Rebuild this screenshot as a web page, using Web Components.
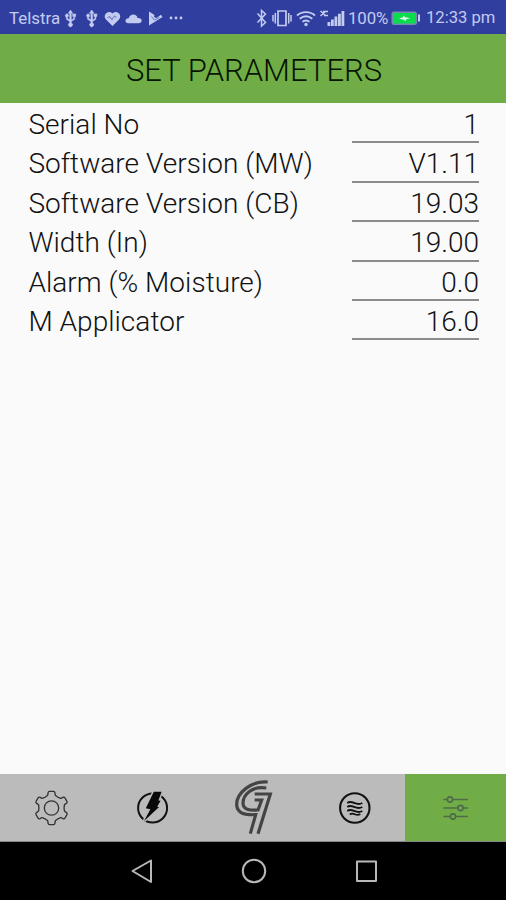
<!DOCTYPE html>
<html lang="en">
<head>
<meta charset="utf-8">
<title>Set Parameters</title>
<style>
html,body{margin:0;padding:0;height:100%;background:#fafafa;overflow:hidden}
body{font-family:Roboto,"Liberation Sans",sans-serif}
</style>
</head>
<body>
<param-screen></param-screen>
<script>
function define(name, html) {
  customElements.define(name, class extends HTMLElement {
    constructor() {
      super();
      this.attachShadow({mode: 'open'}).innerHTML = html;
    }
  });
}

// Outline of a six-toothed gear centred on the origin.
function gearPath() {
  const p = (r, deg) => {
    const a = deg * Math.PI / 180;
    return (r * Math.cos(a)).toFixed(2) + ' ' + (r * Math.sin(a)).toFixed(2);
  };
  let d = '';
  for (let k = 0; k < 6; k++) {
    const a = 60 * k - 90;
    d += (k ? 'L' : 'M') + p(15.6, a - 13) + 'Q' + p(17, a - 11) + ' ' + p(16.8, a - 7) +
         'L' + p(16.8, a + 7) + 'Q' + p(17, a + 11) + ' ' + p(15.6, a + 13) +
         'Q' + p(12.6, a + 15) + ' ' + p(12.9, a + 23) +
         'Q' + p(12.2, a + 30) + ' ' + p(12.9, a + 37) +
         'Q' + p(12.6, a + 45) + ' ' + p(15.6, a + 47);
  }
  return d + 'z';
}

define('status-bar', `
<style>
:host{display:flex;align-items:center;justify-content:space-between;height:34px;box-sizing:border-box;padding:2px 10px 0 9px;background:#303f9f;color:#c3cbf0;font-size:16.6px;line-height:20px}
div{display:flex;align-items:center}
span{white-space:nowrap}
svg{display:block;fill:#c3cbf0;stroke:none}
.l{fill:none;stroke:#c3cbf0}
</style>
<div><span style="width:51px;font-size:16.9px">Telstra</span>
<svg width="126" height="20" viewBox="60 7 126 20">
 <g id="u"><path d="M70.500 9l2.300 3.300h-1.500V19l2.400-1.500v-2h-1v-2.600h3v2.600h-1v2.700l-3.400 2.200v1.500a2 2 0 1 1-1.600 0v-1.500l-3.400-2.200v-2.100a1.600 1.600 0 1 1 1.200 0v1.300l2.200 1.400v-6.500h-1.500z" stroke="#c3cbf0" stroke-width=".5"/></g>
 <use href="#u" x="21.200"/>
 <path d="M112.500 25l-6.500-6.500c-4-4.500 2.500-10.500 6.500-6 4-4.500 10.500 1.500 6.500 6z"/>
 <path class="l" style="stroke:#7a87ca;stroke-width:1.200" d="M107.500 17l2-1.500 2.500 3 2.500-3.500 2 1.500"/>
 <path d="M128.500 22.300c-4 0-4-5 .2-5 1.500-5.500 8.500-4.500 8.800-.2 5.500-.4 5.500 5.200.8 5.200z"/>
 <path d="M149 10.500l5.500 3.500-.5 2 2.500 1 4.500-3.300 1.500 2.300-13.500 8.500z"/>
 <path class="l" style="stroke:#5f6dbb;stroke-width:.9" d="M151.500 15.500l3 3.500 5-2.500"/>
 <circle cx="171" cy="17" r="1.400"/><circle cx="176" cy="17" r="1.400"/><circle cx="181" cy="17" r="1.400"/>
</svg></div>
<div><svg width="92" height="20" viewBox="255 7 92 20">
 <path class="l" stroke-width="1.500" d="M257.500 12.500l8 9-4 3.500V9.500l4 3.500-8 8.500"/>
 <path class="l" stroke-width="1.700" d="M278 10h8v14.500h-8z"/>
 <path class="l" stroke-width="1.500" d="M275.300 12v10.500M273 14v6.500M288.700 12v10.500M291 14v6.500"/>
 <path class="l" stroke-width="1.900" d="M297 14.500c5-4.500 13-4.500 18 0M299.700 17.700c4-3 8.600-3 12.600 0M302.500 20.800c2-1.500 5-1.500 7 0"/>
 <circle cx="306" cy="23.500" r="1.700"/>
 <path class="l" stroke-width="1.600" d="M320.500 10l5.500 5M326 10l-5.500 5M323 10.500h5M324 14.500h4"/>
 <path d="M327.500 21h2.800v4h-2.800zM331 18.500h2.800V25H331zM334.500 15.500h2.800V25h-2.800zM338 12.700h2.800V25H338zM341.500 10h2.800v15h-2.800z"/>
</svg>
<span style="width:40px;margin-left:1px;font-size:16.800px;letter-spacing:-.1px">100%</span>
<svg style="margin-left:3px" width="30" height="20" viewBox="391 7 30 20">
 <rect x="391.500" y="10.500" width="25.500" height="13.500" rx="2.500" fill="#7589b5"/>
 <rect x="393" y="12" width="22.500" height="10.500" rx="1" fill="#0bdc4e"/>
 <path d="M418 13.500h2v7h-2z"/><path fill="#d9ffe3" d="M399 17.500l4-1.300v-1.700l2.500 1.700 4.500 1.100-4 1.300v1.700l-2.500-1.600z"/>
</svg>
<span style="margin-left:5px;width:70px">12:33 pm</span></div>`);

define('title-bar', `
<style>:host{display:flex;height:69px;align-items:center;justify-content:center;background:#70ad47;color:#071500;font-weight:300;font-size:31px;white-space:nowrap;box-sizing:border-box;padding:3px 0 0 2px}</style>
<slot></slot>`);

define('param-row', `
<style>
:host{display:flex;height:39.4px;padding:0 27px 0 28.4px;justify-content:space-between;color:#111;font-weight:300;font-size:28px;line-height:41px}
.name{white-space:nowrap;letter-spacing:.04px}
.value{width:127px;box-sizing:border-box;border-bottom:2px solid #8b8b8b;text-align:right}
</style><div class="name"><slot></slot></div><div class="value"><slot name="value"></slot></div>`);

define('tab-item', `
<style>
:host{flex:1 1 0;display:flex;align-items:center;justify-content:center;background:#bbb}
:host([active]){background:#70ad47}
::slotted(svg){display:block}
</style><slot></slot>`);

define('tab-bar', `<style>:host{display:flex;height:68px;border-bottom:1px solid #888;box-sizing:border-box}</style><slot></slot>`);

define('system-nav', `
<style>
:host{display:flex;height:58px;background:#000;align-items:center;justify-content:center;gap:84px;box-sizing:border-box;padding-left:1px}
svg{display:block;fill:none;stroke:#b9b9b9;stroke-width:2}
</style>
<svg width="28" height="28" viewBox="0 0 28 28"><path stroke-linejoin="round" d="M4.500 14L23 3.500v21.500z"/></svg>
<svg width="28" height="28" viewBox="0 0 28 28"><circle cx="14" cy="14" r="11.200"/></svg>
<svg width="28" height="28" viewBox="0 0 28 28"><path stroke-linejoin="round" d="M5 4.500h19v19.500H5z"/></svg>`);

const bolt = 'M1.200-16.200H9L5.800-7.500 8-7.200 4.500-1.200l2 .3L-8.500 13-2.200 1.200-6.800.2z';

define('param-screen', `
<style>
:host{display:flex;flex-direction:column;width:506px;height:900px;background:#fafafa}
main{flex:1;padding-top:1px}
</style>
<status-bar></status-bar>
<title-bar>SET PARAMETERS</title-bar>
<main>
<param-row>Serial No<span slot="value">1</span></param-row>
<param-row>Software Version (MW)<span slot="value">V1.11</span></param-row>
<param-row>Software Version (CB)<span slot="value">19.03</span></param-row>
<param-row>Width (In)<span slot="value">19.00</span></param-row>
<param-row>Alarm (% Moisture)<span slot="value">0.0</span></param-row>
<param-row>M Applicator<span slot="value">16.0</span></param-row>
</main>
<tab-bar>
<tab-item><svg width="36" height="36" viewBox="-18.500 -18 36 36" fill="none" stroke="#333" stroke-width="1.300" stroke-linejoin="round"><circle r="7.200"/><path d="${gearPath()}"/></svg></tab-item>
<tab-item><svg width="36" height="36" viewBox="-18.600 -18 36 36"><circle r="14.500" fill="none" stroke="#111" stroke-width="2"/><path d="${bolt}" fill="#bbb" stroke="#bbb" stroke-width="3"/><path d="${bolt}" fill="#080808"/></svg></tab-item>
<tab-item><svg width="80" height="68" viewBox="-6 27 240 204" fill="none" stroke="#444" stroke-width="9.500"><path d="M158 51C112 46 64 82 65 120C67 145 88 151 122 149L106 206"/><path d="M154 69C112 62 84 88 84 115C85 133 102 137 129 135L140 105H119"/><path d="M119 87H166L129 206"/></svg></tab-item>
<tab-item><svg width="36" height="36" viewBox="-18.800 -18 36 36" fill="none" stroke="#111"><circle r="14.700" stroke-width="2.100"/><path stroke-width="1.800" d="M-7.500-5C-2.500-9 1-1 7.500-5M-7.500-1C-2.500-5 1 3 7.500-1M-7.500 3C-2.500-1 1 7 7.500 3M-5 6.500C-1 3.500 1 9 5.500 6"/></svg></tab-item>
<tab-item active><svg width="36" height="36" viewBox="-18.800 -18 36 36" fill="none" stroke="#4f6b48" stroke-width="1.600"><path d="M-12.500-8.500h4M-3-8.500h15M-12.500 0H2M7.500 0h4.500M-12.500 8.500h7M0 8.500h12"/><circle cx="-5.800" cy="-8.500" r="2.600"/><circle cx="4.700" r="2.600"/><circle cx="-2.800" cy="8.500" r="2.600"/></svg></tab-item>
</tab-bar>
<system-nav></system-nav>`);
</script>
</body>
</html>
